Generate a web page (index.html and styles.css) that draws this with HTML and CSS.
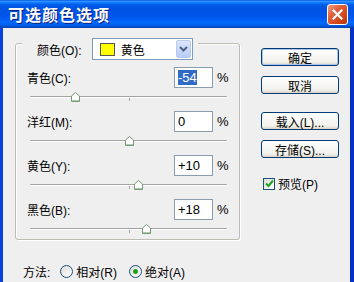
FILE: index.html
```html
<!DOCTYPE html>
<html lang="zh-CN">
<head>
  <meta charset="UTF-8">
  <title>可选颜色选项</title>
  <link rel="stylesheet" href="styles.css">
</head>
<body>
  <div class="window">
    <div class="titlebar">
      <span class="title">可选颜色选项</span>
      <span class="close">
        <svg width="11" height="11" viewBox="0 0 11 11"><path d="M1.5 1.5 L9.5 9.5 M9.5 1.5 L1.5 9.5" stroke="#fff" stroke-width="2.2" stroke-linecap="square"/></svg>
      </span>
    </div>

    <div class="client">
      <div class="main">
        <div class="group">
          <div class="legend">
            <span class="legend-label">颜色(O):</span>
            <div class="combo">
              <span class="swatch"></span>
              <span class="combo-text">黄色</span>
              <span class="combo-btn">
                <svg width="9" height="6" viewBox="0 0 9 6"><path d="M1 1 L4.5 4.5 L8 1" fill="none" stroke="#4d6185" stroke-width="2"/></svg>
              </span>
            </div>
          </div>

          <div class="row">
            <div class="line">
              <span class="label">青色(C):</span>
              <span class="field"><span class="selected">-54</span></span>
              <span class="pct">%</span>
            </div>
            <div class="slider">
              <div class="track"></div>
              <span class="thumb" style="left: 23%"><svg width="9" height="10" viewBox="0 0 9 10"><path d="M4.5 0.5 L8.5 4 V9.5 H0.5 V4 Z" fill="#fff" stroke="#7b977b"/><path d="M1 8.5 H8" stroke="#a9cfa9"/></svg></span>
            </div>
          </div>

          <div class="row">
            <div class="line">
              <span class="label">洋红(M):</span>
              <span class="field">0</span>
              <span class="pct">%</span>
            </div>
            <div class="slider">
              <div class="track"></div>
              <span class="thumb" style="left: 50%"><svg width="9" height="10" viewBox="0 0 9 10"><path d="M4.5 0.5 L8.5 4 V9.5 H0.5 V4 Z" fill="#fff" stroke="#7b977b"/><path d="M1 8.5 H8" stroke="#a9cfa9"/></svg></span>
            </div>
          </div>

          <div class="row">
            <div class="line">
              <span class="label">黄色(Y):</span>
              <span class="field">+10</span>
              <span class="pct">%</span>
            </div>
            <div class="slider">
              <div class="track"></div>
              <span class="thumb" style="left: 55%"><svg width="9" height="10" viewBox="0 0 9 10"><path d="M4.5 0.5 L8.5 4 V9.5 H0.5 V4 Z" fill="#fff" stroke="#7b977b"/><path d="M1 8.5 H8" stroke="#a9cfa9"/></svg></span>
            </div>
          </div>

          <div class="row">
            <div class="line">
              <span class="label">黑色(B):</span>
              <span class="field">+18</span>
              <span class="pct">%</span>
            </div>
            <div class="slider">
              <div class="track"></div>
              <span class="thumb" style="left: 59%"><svg width="9" height="10" viewBox="0 0 9 10"><path d="M4.5 0.5 L8.5 4 V9.5 H0.5 V4 Z" fill="#fff" stroke="#7b977b"/><path d="M1 8.5 H8" stroke="#a9cfa9"/></svg></span>
            </div>
          </div>
        </div>

        <div class="side">
          <button class="btn default">确定</button>
          <button class="btn">取消</button>
          <button class="btn gap">载入(L)...</button>
          <button class="btn">存储(S)...</button>
          <label class="check">
            <span class="box">
              <svg width="9" height="9" viewBox="0 0 9 9"><path d="M1 4.5 L3.5 7 L8 1.5" fill="none" stroke="#21a121" stroke-width="2"/></svg>
            </span>
            预览(P)
          </label>
        </div>
      </div>

      <div class="method">
        <span class="method-label">方法:</span>
        <span class="radio"><span class="circle"></span>相对(R)</span>
        <span class="radio"><span class="circle on"></span>绝对(A)</span>
      </div>
    </div>
  </div>
</body>
</html>
```

FILE: styles.css
```css
body {
  margin: 0;
  background-color: #efefef;
  font-family: "Liberation Sans", "Noto Sans CJK SC", sans-serif;
  font-size: 12px;
  color: #000;
}

.window {
  width: 354px;
  height: 282px;
  overflow: hidden;
}

.titlebar {
  height: 28px;
  display: flex;
  align-items: center;
  justify-content: space-between;
  padding: 0 6px 0 8px;
  background: linear-gradient(to bottom, #0058ee 0%, #3593ff 5%, #127dff 9%, #0262ee 15%, #0057e5 22%, #0054e3 30%, #0055eb 56%, #005bf5 68%, #026afe 78%, #0062ef 88%, #0052d6 94%, #0040ab 100%);
}

.title {
  color: #fff;
  font-family: "Noto Sans CJK SC", sans-serif;
  font-weight: bold;
  font-size: 16px;
  letter-spacing: 1px;
  text-shadow: 1px 1px 0 #0a1e80;
}

.close {
  width: 21px;
  height: 21px;
  box-sizing: border-box;
  border: 1px solid #fff;
  border-radius: 3px;
  background: linear-gradient(135deg, #f0a088 0%, #e2603c 35%, #cc4418 75%, #b43810 100%);
  display: flex;
  align-items: center;
  justify-content: center;
}

.client {
  height: 254px;
  border-left: 3px solid #0842dc;
  border-right: 4px solid #0731c4;
  background-color: #efefef;
}

.main {
  display: flex;
  align-items: flex-start;
}

.group {
  width: 225px;
  box-sizing: border-box;
  margin: 15px 0 0 12px;
  padding: 0 11px 1px;
  border: 1px solid #bcbcb4;
  border-radius: 3px;
  box-shadow: inset 1px 1px 0 #fff, 1px 1px 0 #fff;
}

.legend {
  display: flex;
  align-items: center;
  width: fit-content;
  height: 22px;
  margin: -6px 0 0 -5px;
  padding: 0 5px 0 15px;
  background-color: #efefef;
}

.legend-label {
  margin-right: 10px;
}

.combo {
  width: 101px;
  height: 22px;
  box-sizing: border-box;
  border: 1px solid #7f9db9;
  background-color: #fff;
  display: flex;
  align-items: center;
  padding: 0 1px 0 7px;
}

.swatch {
  width: 15px;
  height: 13px;
  box-sizing: border-box;
  border: 1px solid #555;
  background-color: #ffff00;
}

.combo-text {
  flex: 1;
  margin-left: 6px;
}

.combo-btn {
  width: 15px;
  height: 18px;
  border-radius: 2px;
  background: linear-gradient(to bottom, #dce6fb, #b9cdf7);
  border: 1px solid #b6c9f0;
  box-sizing: border-box;
  display: flex;
  align-items: center;
  justify-content: center;
}

.row {
  margin-top: 6px;
}

.row + .row {
  margin-top: 4px;
}

.line {
  display: flex;
  align-items: center;
  height: 22px;
}

.label {
  flex: 1;
}

.field {
  width: 39px;
  height: 21px;
  box-sizing: border-box;
  border: 1px solid #8a9cb0;
  background-color: #fff;
  padding: 0 3px;
  display: flex;
  align-items: center;
  font-size: 13px;
}

.selected {
  background-color: #316ac5;
  color: #fff;
}

.pct {
  width: 11px;
  margin-left: 4px;
  font-size: 13px;
}

.slider {
  position: relative;
  height: 18px;
  margin: 0 1px 0 3px;
}

.track {
  position: relative;
  top: 8px;
  height: 1px;
  border-top: 1px solid #a3a3a3;
  background-color: #fff;
  border-radius: 1px;
}

.track::after {
  content: "";
  position: absolute;
  left: 50%;
  top: 1px;
  width: 1px;
  height: 3px;
  background-color: #a3a3a3;
}

.thumb {
  position: absolute;
  top: 4px;
  width: 9px;
  height: 10px;
  margin-left: -4px;
  display: flex;
}

.side {
  width: 78px;
  margin: 20px 0 0 21px;
  display: flex;
  flex-direction: column;
}

.btn {
  height: 18px;
  margin: 0 0 10px;
  padding: 0;
  border: 1px solid #003c74;
  border-radius: 3px;
  background: linear-gradient(to bottom, #ffffff, #f2f1ec 80%, #d8d4c8);
  font-family: "Liberation Sans", "Noto Sans CJK SC", sans-serif;
  font-size: 12px;
  color: #000;
}

.btn.default {
  box-shadow: inset 0 0 0 1px #aac4f0;
}

.btn.gap {
  margin-top: 8px;
}

.check {
  display: flex;
  align-items: center;
  margin: 7px 0 0 2px;
}

.box {
  width: 12px;
  height: 12px;
  box-sizing: border-box;
  border: 1px solid #1c5180;
  background: linear-gradient(135deg, #dcdcd6, #fff);
  display: flex;
  align-items: center;
  justify-content: center;
  margin-right: 3px;
}

.method {
  display: flex;
  align-items: center;
  height: 16px;
  margin: 23px 0 0 20px;
}

.method-label {
  margin-right: 10px;
}

.radio {
  display: flex;
  align-items: center;
  margin-right: 12px;
}

.circle {
  width: 13px;
  height: 13px;
  box-sizing: border-box;
  border: 1px solid #1c5180;
  border-radius: 50%;
  background: linear-gradient(135deg, #dcdcd6, #fff);
  margin-right: 3px;
  display: flex;
  align-items: center;
  justify-content: center;
}

.circle.on::after {
  content: "";
  width: 5px;
  height: 5px;
  border-radius: 50%;
  background-color: #21a121;
}
```
